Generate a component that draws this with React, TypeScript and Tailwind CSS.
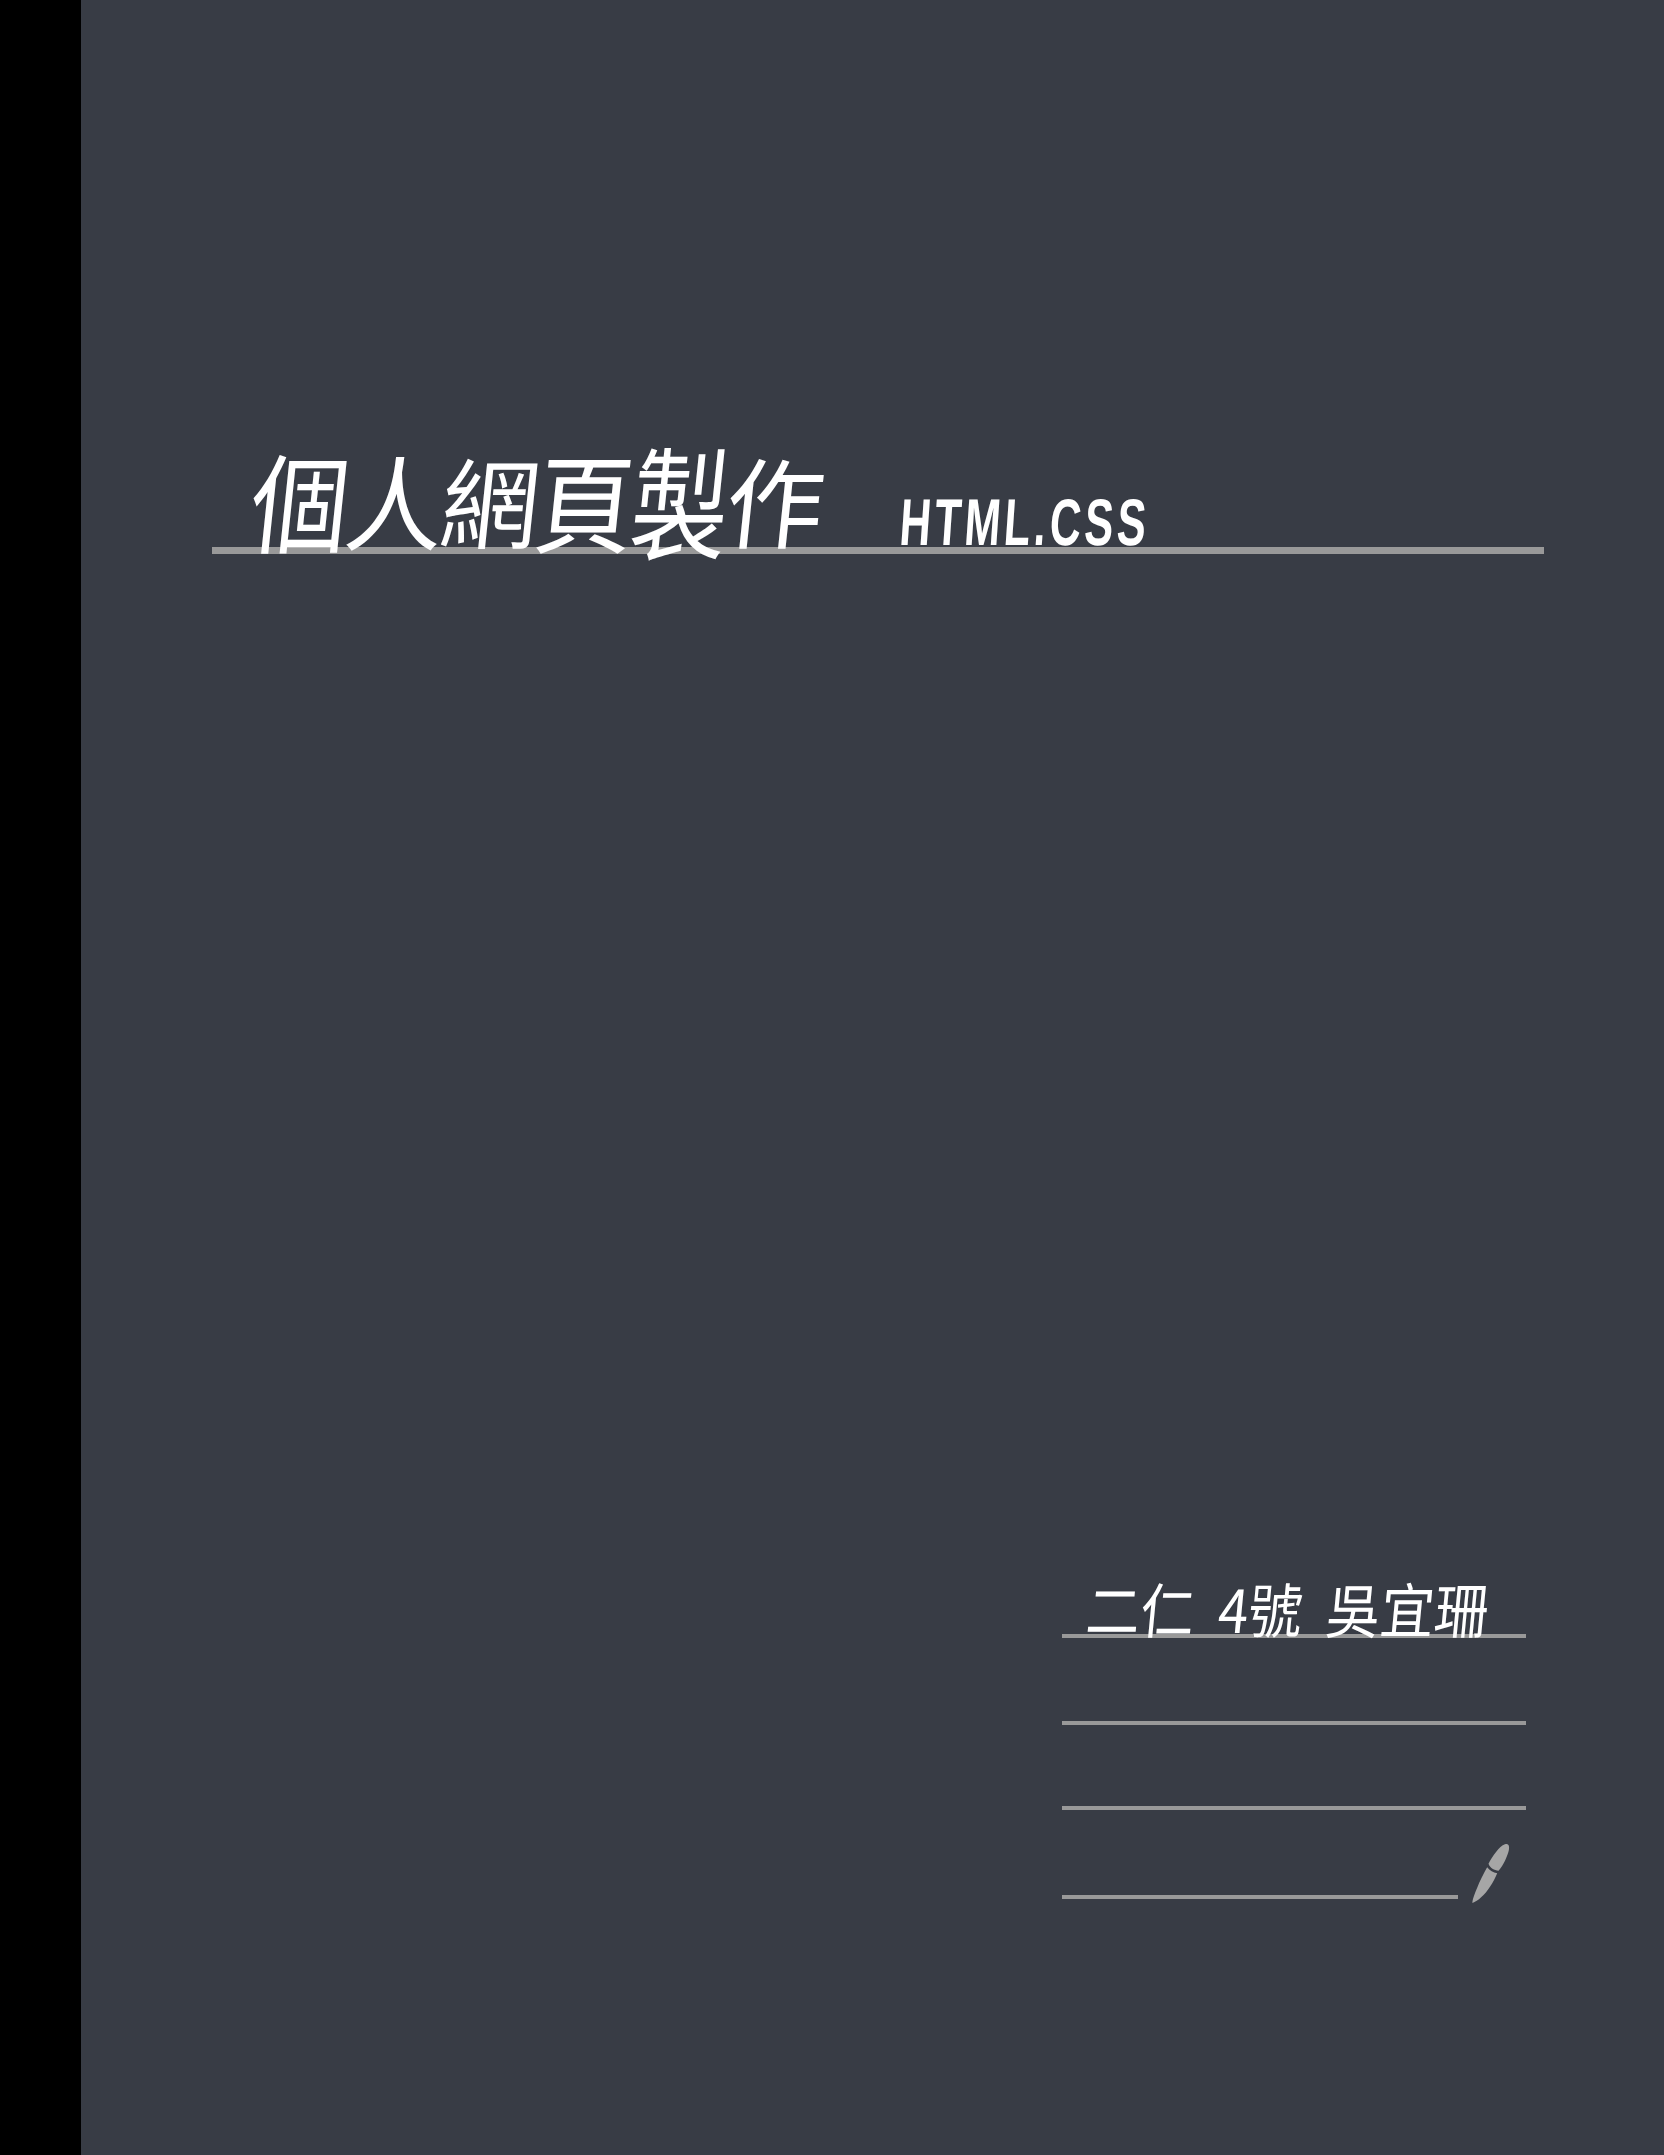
export default function App() {
  const cjk = { fontFamily: '"Noto Sans CJK TC", "Noto Sans CJK SC", sans-serif' };
  return (
    <div className="flex h-[2155px] w-[1664px] overflow-hidden bg-black" style={cjk}>
      <aside className="w-[81px] shrink-0 bg-black" />
      <main className="flex flex-1 flex-col bg-[#383c45] text-white">
        <section className="ml-[131px] mr-[120px] mt-[430px]">
          <div className="flex h-[117px] items-end pl-[40px] leading-none">
            <h1 className="flex text-[98px] font-normal -skew-x-6">
              <span className="-mb-[2px] scale-y-110">個</span>
              <span className="-ml-[3px] scale-y-105">人</span>
              <span className="-ml-[3px] -mb-[2px]">網</span>
              <span className="-ml-[3px] -mb-[6px] scale-y-110">頁</span>
              <span className="-ml-[3px] -mb-[8px] scale-y-125">製</span>
              <span className="-ml-[3px] -mb-[4px]">作</span>
            </h1>
            <p className="ml-[75px] mb-[-6px] origin-left scale-x-[0.72] scale-y-110 whitespace-nowrap text-[60px] font-bold tracking-[5px] -skew-x-6" style={{ fontFamily: '"Liberation Sans", sans-serif' }}>
              HTML.CSS
            </p>
          </div>
          <div className="h-[7px] bg-[#999999]" />
        </section>

        <section className="ml-[981px] mr-[138px] mt-[1010px] flex flex-col">
          <div className="flex h-[70px] items-end pl-[22px] leading-none">
            <p className="mb-[-3px] flex origin-bottom scale-y-110 gap-[24px] whitespace-nowrap text-[54px] font-normal -skew-x-6">
              <span>二仁</span>
              <span>4號</span>
              <span>吳宜珊</span>
            </p>
          </div>
          <div className="h-[4px] bg-[#999999]" />
          <div className="mt-[83px] h-[4px] bg-[#999999]" />
          <div className="mt-[81px] h-[4px] bg-[#999999]" />
          <div className="mt-[32px] flex items-end">
            <div className="mt-[53px] h-[4px] w-[396px] self-start bg-[#999999]" />
            <svg className="ml-[11px] h-[62px] w-[42px] shrink-0" viewBox="200 185 125 185" aria-hidden="true">
              <path d="M258 250 C270 228 290 198 307 192 C317 188 321 194 319 208 C315 226 303 254 288 271 C276 270 262 262 258 250 Z" fill="#a6a6a6" />
              <path d="M254 260 C262 270 272 275 284 278 C272 306 256 332 236 350 C228 358 218 364 210 367 C210 358 216 340 224 322 C232 300 244 278 254 260 Z" fill="#a6a6a6" />
            </svg>
          </div>
        </section>
      </main>
    </div>
  );
}
